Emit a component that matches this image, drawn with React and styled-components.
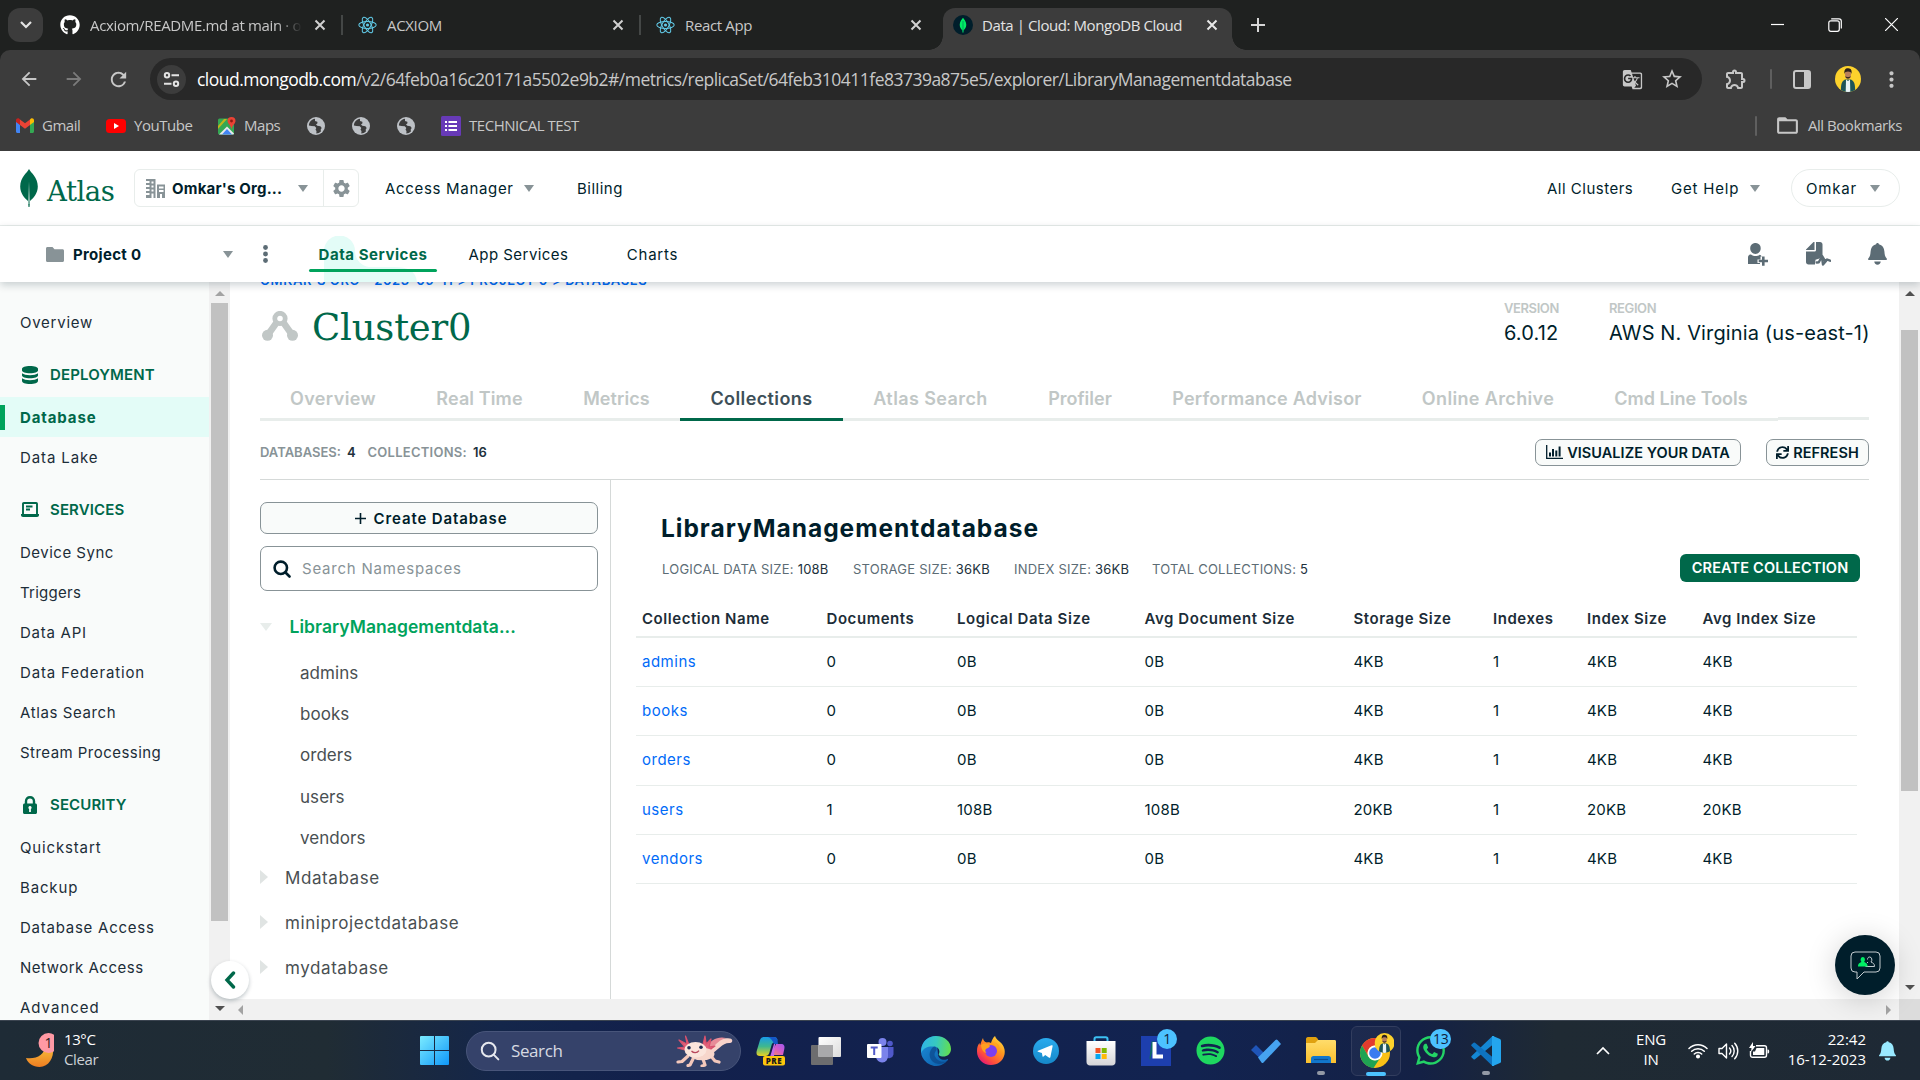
import React from "react";
import styled, { createGlobalStyle, css } from "styled-components";
import { FaGithub, FaSpotify, FaWhatsapp, FaSync } from "react-icons/fa";
import { MdSettings, MdOutlineExtension, MdStarOutline, MdGTranslate, MdMoreVert, MdFolderOpen, MdRefresh, MdArrowBack, MdArrowForward } from "react-icons/md";

const UI = `Inter, "Open Sans", sans-serif`;
const SYS = `"Open Sans", "Noto Sans", sans-serif`;

const Global = createGlobalStyle`
  *, *::before, *::after { box-sizing: border-box; }
  html, body { margin: 0; padding: 0; background: #fff; overflow: hidden; }
  svg { display: block; flex: none; }
`;

const Screen = styled.div`
  width: 1920px;
  height: 1080px;
  display: flex;
  flex-direction: column;
  overflow: hidden;
  font-family: ${UI};
  color: #001e2b;
  white-space: nowrap;
`;

/* ---------- browser chrome ---------- */
const TabStrip = styled.div`
  height: 50px;
  background: #1f2120;
  display: flex;
  padding-left: 8px;
  font: 15px/20px ${SYS};
  letter-spacing: -0.35px;
  color: #c7c7c7;
`;
const TabSearch = styled.div`
  width: 35px;
  height: 34px;
  margin: 8px 2px 0 0;
  border-radius: 12px;
  background: #3c3c3c;
  display: grid;
  place-items: center;
`;
const Tab = styled.div`
  width: 298px;
  height: 50px;
  padding: 0 13px 0 15px;
  display: flex;
  align-items: center;
  gap: 10px;
  border-right: 2px solid transparent;
  border-image: ${(p) => (p.$sep ? "linear-gradient(transparent 30%, #444746 30%, #444746 70%, transparent 70%) 1" : "none")};
`;
const ActiveTab = styled.div`
  position: relative;
  width: 289px;
  height: 42px;
  margin: 8px 0 0 4px;
  padding: 0 12px 8px 10px;
  display: flex;
  align-items: center;
  gap: 9px;
  border-radius: 12px 12px 0 0;
  background: #3c3c3c;
  color: #e3e3e3;
  letter-spacing: -0.42px;
  &::before, &::after {
    content: "";
    position: absolute;
    bottom: 0;
    width: 14px;
    height: 14px;
  }
  &::before { left: -14px; background: radial-gradient(circle at 0 0, transparent 13.5px, #3c3c3c 14px); }
  &::after { right: -14px; background: radial-gradient(circle at 100% 0, transparent 13.5px, #3c3c3c 14px); }
`;
const TabTitle = styled.span`
  flex: 1;
  min-width: 0;
  overflow: hidden;
  ${(p) => p.$fade && css`mask-image: linear-gradient(90deg, #000 88%, transparent 100%);`}
`;
const NewTab = styled.div`
  width: 52px;
  height: 50px;
  display: grid;
  place-items: center;
`;
const WindowControls = styled.div`
  margin-left: auto;
  display: grid;
  grid-template-columns: repeat(3, 57px);
  place-items: center;
  height: 49px;
`;
const ToolbarWrap = styled.div`
  background: #1f2120;
`;
const Toolbar = styled.div`
  height: 58px;
  background: #3c3c3c;
  border-radius: 10px 10px 0 0;
  display: flex;
  align-items: center;
  padding-left: 6px;
`;
const ToolButton = styled.div`
  flex: none;
  width: ${(p) => p.$w || 45}px;
  height: 42px;
  display: grid;
  place-items: center;
  color: ${(p) => (p.$dim ? "#7b7b7b" : "#c7c7c7")};
`;
const Omnibox = styled.div`
  flex: none;
  width: 1552px;
  height: 42px;
  margin-left: 9px;
  padding: 0 10px 0 7px;
  border-radius: 21px;
  background: #282828;
  display: flex;
  align-items: center;
`;
const SiteInfo = styled.div`
  width: 29px;
  height: 29px;
  margin-right: 11px;
  border-radius: 50%;
  background: #3c3c3c;
  display: grid;
  place-items: center;
`;
const Url = styled.div`
  flex: 1;
  font: 17.5px/24px ${SYS};
  color: #c7c7c7;
  letter-spacing: -0.52px;
  b { font-weight: 400; color: #fff; }
`;
const ToolSeparator = styled.i`
  flex: none;
  width: 2px;
  height: 20px;
  border-radius: 1px;
  background: #5f5f5f;
`;
const Bookmarks = styled.div`
  height: 43px;
  background: #3c3c3c;
  display: flex;
  align-items: center;
  padding: 0 0 8px 16px;
  font: 15px/20px ${SYS};
  letter-spacing: -0.47px;
  color: #c7c7c7;
`;
const Bookmark = styled.div`
  width: ${(p) => p.$w}px;
  display: flex;
  align-items: center;
  gap: 8px;
`;
const BookmarkText = styled.span`
  margin-top: -2px;
`;
const BookmarksEnd = styled.div`
  margin-left: auto;
  padding-right: 18px;
  display: flex;
  align-items: center;
  gap: 18px;
`;

/* ---------- Atlas navigation ---------- */
const AtlasNav = styled.header`
  height: 75px;
  background: #fff;
  border-bottom: 1px solid #e8edeb;
  display: flex;
  align-items: center;
  padding: 0 20px;
  font-size: 15px;
`;
const Brand = styled.div`
  width: 114px;
  display: flex;
  align-items: center;
  gap: 9px;
  color: #00684a;
  font: 27.5px/38px "DejaVu Serif", serif;
  letter-spacing: -0.45px;
  span { padding-top: 5px; }
`;
const OrgPicker = styled.div`
  width: 225px;
  height: 38px;
  border: 1px solid #e8edeb;
  border-radius: 6px;
  display: flex;
  align-items: center;
  padding-left: 11px;
`;
const OrgName = styled.span`
  width: 126px;
  margin-left: 7px;
  font-weight: 700;
  letter-spacing: 0.2px;
`;
const OrgSettings = styled.div`
  width: 35px;
  height: 36px;
  margin-left: auto;
  border-left: 1px solid #e8edeb;
  display: grid;
  place-items: center;
  color: #889397;
`;
const NavLink = styled.div`
  width: ${(p) => p.$w}px;
  margin-left: ${(p) => p.$ml || 0}px;
  display: flex;
  align-items: center;
  justify-content: space-between;
  letter-spacing: ${(p) => p.$ls || "0.5px"};
`;
const CaretIcon = styled.i`
  width: 0;
  height: 0;
  border: 5px solid transparent;
  border-top: 7px solid #889397;
  border-bottom: 0;
`;
const NavEnd = styled.div`
  margin-left: auto;
  display: flex;
  align-items: center;
`;
const UserPill = styled.div`
  width: 109px;
  height: 38px;
  margin-left: 31px;
  padding: 0 19px 0 14px;
  border: 1px solid #e8edeb;
  border-radius: 19px;
  display: flex;
  align-items: center;
  justify-content: space-between;
  letter-spacing: 0.8px;
`;
const ProjectNav = styled.nav`
  position: relative;
  z-index: 2;
  height: 56px;
  background: #fff;
  box-shadow: 0 3px 8px rgba(0, 30, 43, 0.2);
  display: flex;
  align-items: center;
  padding: 0 33px 0 46px;
  font-size: 15px;
`;
const ProjectName = styled.span`
  width: 150px;
  margin-left: 9px;
  font-weight: 700;
  letter-spacing: 0.3px;
`;
const ProjectMenu = styled.div`
  margin-left: 30px;
`;
const ProductTab = styled.div`
  position: relative;
  width: ${(p) => p.$w}px;
  height: 56px;
  line-height: 57px;
  text-align: center;
  letter-spacing: ${(p) => p.$ls || "0.45px"};
`;
const CurrentProductTab = styled(ProductTab)`
  margin-left: 41px;
  color: #00684a;
  font-weight: 700;
  letter-spacing: 0.55px;
  span { position: relative; }
  &::after {
    content: "";
    position: absolute;
    left: 0;
    right: 0;
    top: 43px;
    height: 3px;
    border-radius: 2px;
    background: #00a35c;
  }
`;
const TabBlob = styled.svg`
  position: absolute;
  left: 15px;
  top: 10px;
`;
const ProjectActions = styled.div`
  margin-left: auto;
  display: flex;
  align-items: center;
  gap: 37.5px;
  color: #5c6c75;
`;

/* ---------- body ---------- */
const Body = styled.div`
  position: relative;
  flex: 1;
  min-height: 0;
  display: flex;
  overflow: hidden;
`;
const Sidebar = styled.aside`
  width: 209px;
  height: 738px;
  overflow: hidden;
  padding-top: 20px;
  background: #f9fbfa;
  color: #1c2d38;
`;
const SideItem = styled.div`
  height: 40px;
  padding-left: 20px;
  font-size: 15px;
  line-height: 42px;
  letter-spacing: ${(p) => p.$ls || 0.42}px;
`;
const SideItemActive = styled(SideItem)`
  background: linear-gradient(#00a35c, #00a35c) -5px 50% / 10px 25px no-repeat #e3fcf7;
  color: #00684a;
  font-weight: 700;
`;
const SideHeading = styled.div`
  height: 41px;
  margin: 12px 0 2px;
  padding-left: 20px;
  display: flex;
  align-items: center;
  gap: 10px;
  color: #00684a;
  font-size: 15px;
  font-weight: 600;
  letter-spacing: 0.12px;
  svg { width: 20px; }
`;
const ScrollTrack = styled.div`
  width: 21px;
  height: ${(p) => p.$h}px;
  background: #f1f1f1;
  display: flex;
  flex-direction: column;
  align-items: center;
  padding: 9px 0;
`;
const ScrollThumb = styled.i`
  width: 17px;
  height: ${(p) => p.$h}px;
  margin-top: ${(p) => p.$mt}px;
  margin-bottom: auto;
  background: #c1c1c1;
`;
const ScrollArrow = styled.i`
  width: 0;
  height: 0;
  border: 5px solid transparent;
  ${(p) => p.$dir === "up" && css`border-top: 0; border-bottom: 5px solid ${p.$c};`}
  ${(p) => p.$dir === "down" && css`border-bottom: 0; border-top: 5px solid ${p.$c};`}
  ${(p) => p.$dir === "left" && css`border-left: 0; border-right: 5px solid ${p.$c};`}
  ${(p) => p.$dir === "right" && css`border-right: 0; border-left: 5px solid ${p.$c};`}
`;
const MainColumn = styled.div`
  width: 1669px;
  display: flex;
  flex-direction: column;
`;
const HScroll = styled.div`
  height: 21px;
  background: #f1f1f1;
  display: flex;
  align-items: center;
  justify-content: space-between;
  padding: 0 8px;
`;
const EndColumn = styled.div`
  width: 21px;
  background: #dcdcdc;
`;
const Main = styled.main`
  height: 717px;
  overflow: hidden;
  padding: 0 30px;
  display: flex;
  flex-direction: column;
`;
const Breadcrumb = styled.div`
  margin-top: -11px;
  height: 19px;
  color: #016bf8;
  font-size: 13px;
  font-weight: 600;
  line-height: 19px;
  letter-spacing: 0.6px;
`;
const ClusterHeader = styled.div`
  height: 73px;
  display: flex;
  align-items: flex-start;
  padding: 5px 0 0 2px;
`;
const ClusterGlyph = styled.div`
  padding-top: 16px;
`;
const ClusterName = styled.h1`
  margin: 5px 0 0 14px;
  flex: 1;
  font: 400 37px/56px "DejaVu Serif", serif;
  letter-spacing: -0.2px;
  color: #00684a;
`;
const Meta = styled.dl`
  width: ${(p) => p.$w}px;
  margin: 3px 0 0;
  dt { font-size: 13px; font-weight: 600; line-height: 20px; letter-spacing: -0.4px; color: #c1c7c6; }
  dd { margin: 2px 0 0; font-size: 20px; line-height: 26px; letter-spacing: 0.13px; color: #001e2b; }
`;
const ClusterTabs = styled.div`
  display: flex;
  height: 58px;
  align-items: flex-start;
  &::after { content: ""; flex: 1; height: 57px; border-bottom: 3px solid #e8edeb; }
`;
const ClusterTab = styled.div`
  width: ${(p) => p.$w}px;
  height: 58px;
  border-bottom: 3px solid ${(p) => (p.$on ? "#00684a" : "#e8edeb")};
  color: ${(p) => (p.$on ? "#3d4f58" : "#c1c7c6")};
  font-size: 18px;
  font-weight: 600;
  line-height: 72px;
  text-align: center;
  letter-spacing: ${(p) => p.$ls}px;
`;
const CountBar = styled.div`
  height: 59px;
  display: flex;
  align-items: center;
  border-bottom: 1px solid #d5d9d8;
  font-size: 13px;
  font-weight: 600;
  color: #889397;
`;
const Count = styled.div`
  width: ${(p) => p.$w}px;
  display: flex;
  gap: 6px;
  padding-top: 3px;
  letter-spacing: ${(p) => p.$ls || 0}px;
  b { font-weight: 600; color: #21313c; }
`;
const OutlineButton = styled.div`
  width: ${(p) => p.$w}px;
  height: 27px;
  margin-top: 4px;
  margin-left: ${(p) => p.$ml || 0};
  border: 1px solid #889397;
  border-radius: 7px;
  background: #f9fbfa;
  color: #001e2b;
  display: flex;
  align-items: center;
  justify-content: center;
  gap: 4px;
  font-size: 14.5px;
  font-weight: 600;
  letter-spacing: 0.05px;
`;
const CreateDatabase = styled(OutlineButton)`
  width: 338px;
  height: 32px;
  margin: 0;
  padding-left: 4px;
  gap: 8px;
  font-size: 15px;
  letter-spacing: 0.87px;
`;
const Explorer = styled.div`
  flex: 1;
  display: flex;
`;
const Namespaces = styled.div`
  width: 351px;
  border-right: 1px solid #d5d9d8;
  padding: 22px 12px 0 0;
`;
const SearchBox = styled.div`
  height: 45px;
  margin-top: 12px;
  padding-left: 12px;
  border: 1px solid #889397;
  border-radius: 7px;
  display: flex;
  align-items: center;
  gap: 11px;
  color: #889397;
  font-size: 15px;
  letter-spacing: 0.78px;
`;
const TreeOpen = styled.div`
  height: 41px;
  margin-top: 15px;
  display: flex;
  align-items: center;
  gap: 17.5px;
  color: #00a35c;
  font-size: 17.5px;
  font-weight: 600;
  letter-spacing: 0.06px;
`;
const TreeLeaf = styled.div`
  height: 41.2px;
  padding-left: 40px;
  font-size: 17px;
  line-height: 41px;
  letter-spacing: 0.05px;
  color: #494f52;
`;
const TreeGroup = styled.div`
  padding-top: 6px;
  height: 208.5px;
`;
const TreeClosed = styled.div`
  height: 45px;
  display: flex;
  align-items: center;
  gap: 17px;
  font-size: 17px;
  letter-spacing: 0.58px;
  color: #494f52;
`;
const TreeCaretDown = styled.i`
  border: 6.5px solid transparent;
  border-top: 8px solid #e8edeb;
  border-bottom: 0;
`;
const TreeCaretRight = styled.i`
  margin-top: -3px;
  border: 7px solid transparent;
  border-left: 8px solid #e0e4e3;
  border-right: 0;
`;
const Detail = styled.section`
  flex: 1;
  padding: 32px 12px 0 25px;
`;
const DbTitle = styled.h2`
  margin: 0 0 0 25px;
  font-size: 24.5px;
  font-weight: 700;
  line-height: 32px;
  letter-spacing: 0.97px;
`;
const StatRow = styled.div`
  height: 28px;
  margin-top: 10px;
  padding: 0 0 0 26px;
  display: flex;
  align-items: center;
  font-size: 13px;
  color: #5c6c75;
`;
const Stat = styled.span`
  width: ${(p) => p.$w}px;
  padding-top: 1px;
  letter-spacing: 0.23px;
  b { font-weight: 400; color: #21313c; }
`;
const CreateCollection = styled.div`
  width: 180px;
  height: 28px;
  margin: 0 -3px 0 auto;
  border-radius: 6px;
  background: #00684a;
  color: #fff;
  font-size: 14.5px;
  font-weight: 600;
  line-height: 28px;
  text-align: center;
  letter-spacing: 0.18px;
`;
const Table = styled.div`
  margin-top: 16px;
  font-size: 15px;
`;
const Row = styled.div`
  height: 49.2px;
  display: grid;
  grid-template-columns: 184.5px 130.5px 187.5px 209px 139.5px 94px 115.5px 1fr;
  align-items: center;
  padding: 0 0 1px 6px;
  border-bottom: 1px solid #e8edeb;
  letter-spacing: 0.18px;
`;
const HeadRow = styled(Row)`
  height: 40px;
  padding: 2px 0 0 6px;
  border-bottom-width: 2px;
  font-weight: 600;
  letter-spacing: 0.56px;
  color: #1c2d38;
`;
const CollectionLink = styled.span`
  color: #016bf8;
  letter-spacing: 0.5px;
`;
const CollapseButton = styled.div`
  position: absolute;
  left: 211px;
  top: 679px;
  width: 38px;
  height: 38px;
  border-radius: 50%;
  background: #fff;
  box-shadow: 0 2px 4px rgba(0, 30, 43, 0.25);
  display: grid;
  place-items: center;
`;
const ChatButton = styled.div`
  position: absolute;
  left: 1835px;
  top: 653px;
  width: 60px;
  height: 60px;
  border-radius: 50%;
  background: #001e2b;
  box-shadow: 0 4px 30px rgba(0, 0, 0, 0.18);
  display: grid;
  place-items: center;
`;

/* ---------- taskbar ---------- */
const Taskbar = styled.footer`
  height: 60px;
  border-top: 1px solid #3b4450;
  background: linear-gradient(90deg, #1e2b36 0, #202c34 17%, #14264a 26%, #12204c 34%, #122350 62%, #142145 74%, #1f2a33 81%, #1e2935 100%);
  display: flex;
  align-items: center;
  font: 15px/20px ${SYS};
  color: #fff;
`;
const Weather = styled.div`
  width: 420px;
  padding-left: 25px;
  display: flex;
  gap: 10px;
  align-items: center;
`;
const WeatherText = styled.div`
  margin-top: -3px;
  line-height: 20px;
  font-size: 15px;
  letter-spacing: -0.4px;
  p { margin: 0; }
  p + p { color: #cdd1d6; }
`;
const TaskSearch = styled.div`
  width: 275px;
  height: 40px;
  margin: 0 2px 0 17px;
  padding: 0 7px 0 13px;
  border: 1px solid #48557a;
  border-radius: 20px;
  background: #35426a;
  display: flex;
  align-items: center;
  gap: 11px;
  font-size: 17px;
  letter-spacing: -0.4px;
  color: #d7dae2;
  svg:last-child { margin-left: auto; }
`;
const TaskSlot = styled.div`
  position: relative;
  width: 55px;
  height: 50px;
  display: grid;
  place-items: center;
  &::after {
    content: "";
    position: absolute;
    left: 50%;
    bottom: ${(p) => (p.$active ? 0 : 1)}px;
    width: ${(p) => (p.$active ? 20 : p.$open ? 8 : 0)}px;
    height: 4px;
    border-radius: 2px;
    transform: translateX(-50%);
    background: ${(p) => (p.$active ? "#4cc2ff" : "#9399a5")};
  }
`;
const ActiveTile = styled.div`
  width: 50px;
  height: 50px;
  border-radius: 6px;
  border: 1px solid #323d5e;
  background: #26325480;
  display: grid;
  place-items: center;
`;
const CountBadge = styled.span`
  position: absolute;
  top: 3px;
  left: ${(p) => p.$x}px;
  min-width: 20px;
  height: 20px;
  padding: 0 3px;
  border-radius: 10px;
  background: #4cc2ff;
  color: #10203a;
  font-size: 14px;
  line-height: 20px;
  text-align: center;
  letter-spacing: -0.3px;
`;
const Tray = styled.div`
  flex: 1;
  padding-left: 83px;
  display: flex;
  align-items: center;
  font-size: 15px;
  letter-spacing: -0.2px;
`;
const Language = styled.div`
  width: 50px;
  margin: -3px 12px 0 16px;
  text-align: center;
  line-height: 20px;
`;
const TrayIcons = styled.div`
  display: flex;
  gap: 10px;
  align-items: center;
`;
const Clock = styled.div`
  width: 97px;
  margin: -3px 13px 0 -1px;
  text-align: right;
  line-height: 20px;
  letter-spacing: 0;
`;

/* ---------- icons ---------- */
const Close = ({ c = "#d0d0d0" }) => (
  <svg width="16" height="16" viewBox="0 0 16 16"><path d="M3.500 3.500l9 9M12.500 3.500l-9 9" stroke={c} strokeWidth="2" /></svg>
);
const ReactLogo = () => (
  <svg width="19" height="20" viewBox="-12 -12 24 24" fill="none" stroke="#61c9e6" strokeWidth="1.300">
    <circle r="2" fill="#61c9e6" stroke="none" />
    <ellipse rx="11" ry="4.300" /><ellipse rx="11" ry="4.300" transform="rotate(60)" /><ellipse rx="11" ry="4.300" transform="rotate(120)" />
  </svg>
);
const MongoFavicon = () => (
  <svg width="20" height="20" viewBox="0 0 20 20"><circle cx="10" cy="10" r="10" fill="#001e2b" /><path d="M10 2.800c1 1.800 3.300 3.400 3.300 7 0 3-1.700 4.700-2.900 5.600L10.200 17.500h-.5l-.2-2.100C8.300 14.500 6.700 12.800 6.700 9.800 6.700 6.200 9 4.600 10 2.800z" fill="#00ed64" /><path d="M10 6v11.500" stroke="#00a35c" strokeWidth="1" /></svg>
);
const Tune = () => (
  <svg width="17" height="17" viewBox="0 0 17 17" fill="none" stroke="#e3e3e3" strokeWidth="2"><circle cx="4" cy="4.300" r="2.200" /><path d="M8.500 4.300H16M1 12.700h7.500" /><circle cx="13" cy="12.700" r="2.200" /></svg>
);
const Globe = () => (
  <svg width="18" height="18" viewBox="0 0 18 18"><circle cx="9" cy="9" r="9" fill="#bdc1c6" /><path d="M8 1.800c-3.500.5-6 3.300-6.100 6.600L4.500 9l3.300.3 1.500 1.800-.8 1.600 1 1.300-.2 2.400c1.800 0 3.400-.8 4.600-2l-.2-1.900 1-1.500-1.300-1.800-3.100-.4L9 7.500l1.500-1.300-.2-1.500L8 4z" fill="#3c3c3c" /></svg>
);
const Gmail = () => (
  <svg width="18" height="15" viewBox="0 0 18 15"><path d="M0 2v11.500C0 14.300.6 15 1.500 15H4V6.500z" fill="#4285f4" /><path d="M18 2v11.500c0 .8-.6 1.500-1.500 1.500H14V6.500z" fill="#34a853" /><path d="M0 2.500V4l4 3V1.500L3 .6C1.800-.3 0 .6 0 2.500z" fill="#c5221f" /><path d="M18 2.500V4l-4 3V1.500l1-.9C16.200-.3 18 .6 18 2.500z" fill="#fbbc04" /><path d="M4 1.500l5 3.800 5-3.800V7l-5 3.800L4 7z" fill="#ea4335" /></svg>
);
const Maps = () => (
  <svg width="18" height="18" viewBox="0 0 18 18"><rect y="1.500" width="16" height="16" rx="1.500" fill="#34a853" /><path d="M1 17.500L9 9.500l7 7-.5 1z" fill="#e8eaed" /><path d="M4 17.500l5-5.500 5 5.500z" fill="#4285f4" /><path d="M0 16V9l6-7h3L0 12z" fill="#fbbc04" opacity=".7" /><path d="M13.500 0A4 4 0 0 0 9.500 4c0 3 4 4.300 4 9 0-4.700 4-6 4-9a4 4 0 0 0-4-4z" fill="#ea4335" /><circle cx="13.500" cy="4" r="1.400" fill="#8e1b12" /></svg>
);
const FormIcon = () => (
  <svg width="20" height="20" viewBox="0 0 20 20"><rect width="20" height="20" rx="1.500" fill="#673ab7" /><path d="M7.500 6h8.500M7.500 10h8.500M7.500 14h8.500M4 6h2M4 10h2M4 14h2" stroke="#fff" strokeWidth="2" /></svg>
);
const YouTube = () => (
  <svg width="20" height="14" viewBox="0 0 20 14"><rect width="20" height="14" rx="3.500" fill="#f00" /><path d="M8 4l5 3-5 3z" fill="#fff" /></svg>
);
const Portrait = ({ size = 26 }) => (
  <svg width={size} height={size} viewBox="0 0 26 26"><clipPath id={"pc" + size}><circle cx="13" cy="13" r="13" /></clipPath><g clipPath={`url(#pc${size})`}><rect width="26" height="26" fill="#fdd22c" /><path d="M6 26c-.500-8 1-11 4-12.500h6c3 1.500 4.500 4.500 4 12.500z" fill="#1e5457" /><path d="M11 13.500l2 1.500 2-1.500.3 12.500h-4.600z" fill="#e9f4f6" /><ellipse cx="13" cy="8.500" rx="3" ry="4.200" fill="#b97f5a" /><path d="M9.500 8C8.800 3.800 10.500 2 13.300 2.200c3 .2 3.800 2.300 3.200 5.800-.5-2-1.500-2.600-3.500-2.600s-3 .6-3.500 2.600z" fill="#2b211d" /><path d="M10.200 10.200c.5 3.200 5 3.200 5.600 0-1 1-4.600 1-5.600 0z" fill="#3a2a22" /></g></svg>
);
const Leaf = () => (
  <svg width="18" height="38" viewBox="0 0 18 38"><path d="M9 0c1.500 3.500 8.800 8 8.800 17.500 0 7-4.300 11.500-7.800 14.500l-.5 6h-1L8 32C4.500 29 .2 24.500.2 17.500.2 8 7.500 3.500 9 0z" fill="#00684a" /><path d="M9 13l.6 19-.2 3h-.8l-.2-3z" fill="#fff" opacity=".85" /></svg>
);
const Building = () => (
  <svg width="19" height="19" viewBox="0 0 19 19"><path fillRule="evenodd" d="M0 0h9.500v19H0v-3h3.500v-2H0v-2h3.500v-2H0V8h3.500V6H0V4h3.500V2H0zM5.500 2.500v2h2v-2zm0 4v2h2v-2zm0 4v2h2v-2zm0 4V19h2v-4.500zM11 5.500h8V19h-3v-4h-2v4h-3zm2 2v2h4.500v-2zm0 3.500v2h4.500v-2z" fill="#889397" /></svg>
);
const FolderSolid = () => (
  <svg width="18" height="15" viewBox="0 0 18 15"><path d="M0 1.500C0 .7.600 0 1.500 0h5l2 2.300H16.500c.9 0 1.500.6 1.500 1.500V13.500c0 .9-.6 1.500-1.500 1.500h-15C.6 15 0 14.400 0 13.500z" fill="#889397" /></svg>
);
const Dots = () => (
  <svg width="5" height="18" viewBox="0 0 5 18" fill="#5c6c75"><circle cx="2.500" cy="2.500" r="2.400" /><circle cx="2.500" cy="9" r="2.400" /><circle cx="2.500" cy="15.500" r="2.400" /></svg>
);
const InviteUser = () => (
  <svg width="20" height="23" viewBox="0 0 20 23" fill="#5c6c75"><path d="M7.500 0a5 5 0 0 1 5.200 5.300c0 3.200-2.300 5.700-5.200 5.700S2.200 8.500 2.200 5.300A5 5 0 0 1 7.500 0z" /><path d="M0 21v-6.500C0 12.300 1.500 11.500 3 11.500c1.500 1.200 3 1.500 4.500 1.500s3-.3 4.200-1.300c1 .3 1.800.8 2 1.800h-1.200v3H9.500V20H12v1z" /><path d="M14 13.500h2.600v3.200H20v2.600h-3.400v3.400H14v-3.400h-3.300v-2.600H14z" /></svg>
);
const ActivityFeed = () => (
  <svg width="25" height="24" viewBox="0 0 25 24" fill="#5c6c75"><path d="M8.500 0v8H0V7.500L7.500 0zM10 0h4c1.500 0 2.500 1 2.500 2.500V13l-3 3.500-4 1.200L9 22.500H2.500C1 22.500 0 21.500 0 20V9.600h8.300c1 0 1.700-.6 1.700-1.600z" /><path d="M10.800 20.500l2-.3 3.300-6.200 3 5 2-1.500 2.900 1.200M16 15l1 7.500 3-3.500" stroke="#5c6c75" strokeWidth="2.400" fill="none" strokeLinejoin="round" strokeLinecap="round" /></svg>
);
const Bell = ({ c = "#5c6c75", w = 19, h = 22 }) => (
  <svg width={w} height={h} viewBox="0 0 19 22" fill={c}><path d="M9.500 0c.8 0 1.400.6 1.400 1.300 3.500.8 5.300 3.700 5.500 7.200.2 3.500.8 5.500 2.300 7 .5.6.3 1.500-.6 1.500H.9c-.9 0-1.100-.9-.6-1.500 1.500-1.500 2.100-3.500 2.300-7 .2-3.500 2-6.400 5.500-7.200C8.100.6 8.700 0 9.500 0zM6.300 18.500h6.400c0 1.900-1.400 3.200-3.200 3.200s-3.200-1.300-3.200-3.200z" /></svg>
);
const DatabaseIcon = () => (
  <svg width="16" height="18" viewBox="0 0 16 18" fill="#00684a"><path d="M0 3C0 1.200 3.300 0 8 0s8 1.200 8 3v1.500c0 1.500-3.300 2.700-8 2.700S0 6 0 4.500z" /><path d="M0 7.200c1.500 1.300 4.500 2 8 2s6.500-.7 8-2v2.300c0 1.600-3.300 2.700-8 2.700S0 11.100 0 9.500z" /><path d="M0 12.300c1.500 1.300 4.500 2 8 2s6.500-.7 8-2v2.400C16 16.800 12.700 18 8 18s-8-1.200-8-3.300z" /></svg>
);
const LaptopIcon = () => (
  <svg width="18" height="15" viewBox="0 0 18 15"><path d="M2 12V1.800C2 1.300 2.300 1 2.800 1h12.400c.5 0 .8.300.8.800V12M5 4.500h6.500M5 7.500h4" fill="none" stroke="#00684a" strokeWidth="1.900" /><path d="M0 12h18v1c0 1.200-.8 2-2 2H2c-1.200 0-2-.8-2-2z" fill="#00684a" /></svg>
);
const LockIcon = () => (
  <svg width="14" height="18" viewBox="0 0 14 18"><path d="M3 8V5.200C3 3 4.600 1.300 7 1.300S11 3 11 5.200V8" fill="none" stroke="#00684a" strokeWidth="2.400" /><path fillRule="evenodd" d="M1.500 7.500h11c.8 0 1.500.7 1.500 1.500v7.500c0 .8-.7 1.500-1.500 1.500h-11C.7 18 0 17.300 0 16.500V9c0-.8.700-1.500 1.500-1.500zM7 10a1.700 1.700 0 0 0-.9 3.100V16h1.800v-2.900A1.700 1.700 0 0 0 7 10z" fill="#00684a" /></svg>
);
const ReplicaIcon = () => (
  <svg width="36" height="30" viewBox="0 0 36 30"><path d="M15 11L6.500 23M21 11l8.500 12" stroke="#c1c7c6" strokeWidth="6.500" /><circle cx="18" cy="7.500" r="5.200" fill="none" stroke="#c1c7c6" strokeWidth="4.800" /><circle cx="5.500" cy="24.300" r="5.500" fill="#c1c7c6" /><circle cx="30.500" cy="24.300" r="5.500" fill="#c1c7c6" /></svg>
);
const ChartIcon = () => (
  <svg width="17" height="14" viewBox="0 0 17 14"><path d="M.7 0v13.300H17" fill="none" stroke="#001e2b" strokeWidth="1.300" /><path d="M4 11.500V7.500M7 11.500V4M10.300 11.500V5.500M13.600 11.500V1.500" stroke="#001e2b" strokeWidth="2" /></svg>
);
const SearchGlyph = ({ c = "#001e2b", s = 18, w = 2.6 }) => (
  <svg width={s} height={s} viewBox="0 0 18 18" fill="none" stroke={c} strokeWidth={w} strokeLinecap="round"><circle cx="7.800" cy="7.800" r="6.200" /><path d="M12.500 12.500l4 4" /></svg>
);
const Moon = () => (
  <svg width="29" height="36" viewBox="0 0 29 36"><defs><linearGradient id="mn" x1="0" y1="0" x2="0" y2="1"><stop offset="0" stopColor="#f7c23c" /><stop offset="1" stopColor="#ee7d22" /></linearGradient></defs><path d="M28 16c1 8-4 18-13.500 18C8 34 3 30.500 1 25c10 1.500 19-3 19-12z" fill="url(#mn)" /><circle cx="23.500" cy="10" r="10" fill="#ff99a4" /><text x="23.500" y="15" textAnchor="middle" fontFamily="Open Sans" fontSize="14" fill="#2b1a1c">1</text></svg>
);
const WinLogo = () => (
  <svg width="29" height="29" viewBox="0 0 29 29"><defs><linearGradient id="wl" x1="0" y1="0" x2="1" y2="1"><stop offset="0" stopColor="#7bebff" /><stop offset="1" stopColor="#0f97f8" /></linearGradient></defs><path d="M0 1q0-1 1-1h13v14H0zM15 0h13q1 0 1 1v13H15zM0 15h14v14H1q-1 0-1-1zM15 15h14v13q0 1-1 1H15z" fill="url(#wl)" /></svg>
);
const Axolotl = () => (
  <svg width="57" height="32" viewBox="0 0 57 32"><path d="M30 14C36 6 44 2 54 3.500c3 .5 3 4 0 4.500-8-.5-11 7-20 12z" fill="#f8d3ca" /><path d="M30 13C34 5 42 1 50 3c-6 2-10 5-15 12z" fill="#e88c98" /><path d="M13 10L9.500 1l1.500 8-8-4 6 7-7.500 1L9 15M27 9.500L29 1l1.200 8L35 4l-2 8 6-1-7 5" fill="#e0627a" stroke="#d9526e" strokeWidth="1.200" strokeLinejoin="round" /><path d="M12 21l-6 5.500-4 .5M17 24l-3 6-2 .5M27 24l2 6-3 1M34 20l5 6 4 1" stroke="#f4c8bb" strokeWidth="3.200" fill="none" strokeLinecap="round" strokeLinejoin="round" /><ellipse cx="26" cy="19" rx="12.500" ry="6.300" fill="#f7d6cb" /><ellipse cx="19.500" cy="14.800" rx="11" ry="7.800" fill="#fbe5dc" /><circle cx="13" cy="12.800" r="1.800" fill="#1c2c52" /><circle cx="25" cy="12.300" r="1.800" fill="#1c2c52" /><path d="M15.500 16c2 2.300 5.500 2.300 7.500-.3" stroke="#b8465c" strokeWidth="1.200" fill="none" /></svg>
);
const Copilot = () => (
  <svg width="30" height="30" viewBox="0 0 30 30"><defs><linearGradient id="ca" x1="0" y1="0" x2="0" y2="1"><stop offset="0" stopColor="#189be8" /><stop offset=".5" stopColor="#3fb88e" /><stop offset="1" stopColor="#e8d222" /></linearGradient><linearGradient id="cb" x1="1" y1="0" x2="0" y2="1"><stop offset="0" stopColor="#a158f0" /><stop offset=".5" stopColor="#d65bc6" /><stop offset="1" stopColor="#f98b5a" /></linearGradient></defs><path d="M8 1h10c2 0 3 1 3.500 3L20 6c-3 0-4 1-4.700 4l-2 7c-.7 2-2 3-4 3H4c-3 0-4-2-3.300-5L4 4c.7-2 2-3 4-3z" fill="url(#ca)" /><path d="M12 1h6c2 0 3 1 3.500 3L22 8h-4c-2-4-3-6-6-7z" fill="#1557c8" /><path d="M20 8h5c3 0 4 2 3.300 5L27 19H15z" fill="url(#cb)" /><path d="M19 8h-1l-4 13h4z" fill="#c86ae8" /><rect x="7" y="20" width="22" height="9.500" rx="2" fill="#fdc60c" /><text x="18" y="27.700" textAnchor="middle" fontFamily="Open Sans" fontWeight="800" fontSize="8" letterSpacing=".5" fill="#1b1b1b">PRE</text></svg>
);
const TaskView = () => (
  <svg width="30" height="28" viewBox="0 0 30 28"><defs><linearGradient id="tv" x1="0" y1="0" x2="1" y2="1"><stop offset="0" stopColor="#fff" /><stop offset="1" stopColor="#dcdcdc" /></linearGradient></defs><rect y="8" width="22" height="20" rx="1" fill="#6d6d6f" /><rect x="7.500" y="0" width="22.500" height="20" rx="1" fill="url(#tv)" /><path d="M7.500 8H22v12H7.500z" fill="#a9a9ab" /></svg>
);
const Teams = () => (
  <svg width="28" height="26" viewBox="0 0 28 26"><circle cx="23" cy="5.500" r="2.800" fill="#5059c9" /><path d="M18 9h8.500v7.500a4.500 4.500 0 0 1-8 2z" fill="#5059c9" /><circle cx="15.500" cy="4" r="4" fill="#7b83eb" /><path d="M9 9h12v9a6 6 0 0 1-12 1z" fill="#7b83eb" /><rect y="6" width="14.500" height="14" rx="1" fill="#fff" /><path d="M3.700 9.500h7M7.200 9.500v7.500" stroke="#5059c9" strokeWidth="2" /></svg>
);
const Edge = () => (
  <svg width="30" height="30" viewBox="0 0 30 30"><defs><linearGradient id="ea" x1="0" y1=".3" x2="1" y2=".4"><stop offset="0" stopColor="#2fb3e8" /><stop offset=".5" stopColor="#37c9c0" /><stop offset="1" stopColor="#62de50" /></linearGradient><linearGradient id="eb" x1="0" y1="0" x2="1" y2="1"><stop offset="0" stopColor="#1d90dc" /><stop offset="1" stopColor="#0b5aa6" /></linearGradient></defs><path d="M15 0a15 15 0 1 0 11.500 24.600c1-1.200.4-1.800-.6-1.300-4 1.700-8.900-.6-8.900-5.300z" fill="url(#eb)" /><path d="M.2 13C1.500 5 7.500 0 15 0c9 0 15 6 15 13 0 5-4 7.500-7.500 7.500-4 0-5.500-1.500-4.500-3 1-1.700.5-6.500-5-7C8 10 2.500 11 .2 17z" fill="url(#ea)" /><path d="M13.500 10.500C9 12 6.500 20 11 25c3.500 3.800 10 4 15 .5-5 1-10-.5-12-5-1.200-3 .5-5 1.500-6.500.7-1.500-.5-3-2-3.500z" fill="#0c4a8c" opacity=".75" /></svg>
);
const Firefox = () => (
  <svg width="30" height="30" viewBox="0 0 30 30"><defs><linearGradient id="fa" x1="1" y1="0" x2=".2" y2="1"><stop offset="0" stopColor="#fff14d" /><stop offset=".4" stopColor="#ff9a1e" /><stop offset=".75" stopColor="#ff4f3b" /><stop offset="1" stopColor="#e0117e" /></linearGradient></defs><path d="M19 0c1 3 3 4 5 6 4 3.500 5.500 8 4.500 12.500C27 25 21.500 29 15 29 7 29 1 23 1 15.500c0-4 .6-6 2.500-8.500l.5 2.500C5 6 6 4 7 2c.3 2.500 1.500 4 4 4.500 2-.5 3 .2 4 .5 1-3 2-5.500 4-7z" fill="url(#fa)" /><circle cx="15" cy="15" r="6" fill="#7b3ff0" /><path d="M5 9c3-2 6-2 9 1-1 2-3 2-4 3s-1 2.500.5 4c-3-.5-5-3-5.500-8zM16 6c5 1 7 5 6 10 3-4 2-9-6-10z" fill="#ff9f1f" /></svg>
);
const Telegram = () => (
  <svg width="26" height="26" viewBox="0 0 26 26"><defs><linearGradient id="tg" x1="0" y1="0" x2="0" y2="1"><stop offset="0" stopColor="#2aabee" /><stop offset="1" stopColor="#1688c9" /></linearGradient></defs><circle cx="13" cy="13" r="13" fill="url(#tg)" /><path d="M5 12.800l13.500-5.500c.8-.3 1.300.1 1.100 1l-2.200 10.600c-.2.900-.8 1.100-1.600.7l-3.600-2.700-1.700 1.700c-.4.400-.9.200-1-.3l-.6-3.300L5 13.800c-.6-.2-.6-.7 0-1zM9.500 14.500l7-5-5.500 5.800z" fill="#fff" /></svg>
);
const Store = () => (
  <svg width="30" height="30" viewBox="0 0 30 30"><defs><linearGradient id="st" x1="0" y1="0" x2="0" y2="1"><stop offset="0" stopColor="#fff" /><stop offset="1" stopColor="#d5d5d8" /></linearGradient></defs><path d="M8.500 6V3c0-1 .6-1.700 1.700-1.700h9.600c1 0 1.700.7 1.700 1.700v3" fill="none" stroke="#3cc0f2" strokeWidth="2" /><path d="M.5 5h29v21c0 2-1.500 3.500-3.500 3.500H4c-2 0-3.500-1.500-3.500-3.500z" fill="url(#st)" /><path d="M9.500 12h5v5h-5z" fill="#f35325" /><path d="M15.700 12h5v5h-5z" fill="#7fba00" /><path d="M9.500 18h5v5h-5z" fill="#05a6f0" /><path d="M15.700 18h5v5h-5z" fill="#ffba08" /></svg>
);
const LApp = () => (
  <svg width="30" height="30" viewBox="0 0 30 30"><path d="M0 0h30v30H0z" fill="#1d3fae" /><path d="M8.500 22l2-16.500h3.500L9 24z" fill="#0d6b62" /><path d="M13.500 6v14.500H22" fill="none" stroke="#fff" strokeWidth="4" /></svg>
);
const Todo = () => (
  <svg width="30" height="26" viewBox="0 0 30 26"><path d="M0 12l5-5 8 8-4.500 5z" fill="#1f55b8" /><path d="M7 19.500L24.500 2q1-1 2 0L30 6 12.500 24.500q-1 1-2 0z" fill="#46a3f0" /></svg>
);
const Explore = () => (
  <svg width="30" height="27" viewBox="0 0 30 27"><defs><linearGradient id="fe" x1="0" y1="0" x2="0" y2="1"><stop offset="0" stopColor="#ffdc6b" /><stop offset="1" stopColor="#fbc02d" /></linearGradient></defs><path d="M0 2C0 1 .6 0 2 0h7c1 0 2 .5 2.500 1.500L13 4v6H0z" fill="#e0a10f" /><path d="M0 6h9l3-3h16.500C29.500 3 30 3.600 30 4.500V26H0z" fill="url(#fe)" /><path d="M5 26v-4.500C5 20 6 19 7.500 19h15c1.500 0 2.500 1 2.500 2.500V26z" fill="#1277cc" /><path d="M8 22.500h14" stroke="#0b4f93" strokeWidth="1.200" /></svg>
);
const ChromeApp = () => (
  <svg width="36" height="36" viewBox="0 0 36 36"><g transform="translate(2 5)"><circle cx="15" cy="15" r="15" fill="#fbc116" /><path d="M2 7.500A15 15 0 0 1 28 7.500H15a7.500 7.500 0 0 0-6.800 10.500z" fill="#e33b2e" /><path d="M2 7.500A15 15 0 0 0 13.500 30l6.300-9.500a7.500 7.500 0 0 1-11.300-2z" fill="#1fa353" /><circle cx="15" cy="15" r="7.500" fill="#fff" /><circle cx="15" cy="15" r="5.800" fill="#3a7cf0" /></g><g transform="translate(16.500 0)"><Portrait size={20} /></g></svg>
);
const VSCode = () => (
  <svg width="30" height="30" viewBox="0 0 30 30"><path d="M22 0l7 3q1 .5 1 1.500v21q0 1-1 1.500l-7 3z" fill="#24a5ee" /><path d="M22 0v8.500L4 23.200q-.8.600-1.500 0L.6 21.500q-.8-.7 0-1.500L21 .5z" fill="#1487d4" /><path d="M22 30v-8.500L4 6.800q-.8-.6-1.500 0L.6 8.500q-.8.700 0 1.500L21 29.500z" fill="#0e73c0" /><path d="M22 0v30" stroke="#24a5ee" strokeWidth="2" /></svg>
);
const Wifi = () => (
  <svg width="20" height="16" viewBox="0 0 20 16" fill="none" stroke="#fff" strokeWidth="1.500" strokeLinecap="round"><path d="M1 5.500a12.700 12.700 0 0 1 18 0M3.700 8.300a8.900 8.900 0 0 1 12.600 0M6.300 11a5.200 5.200 0 0 1 7.400 0" /><circle cx="10" cy="13.500" r="1.300" fill="#fff" /></svg>
);
const Volume = () => (
  <svg width="21" height="18" viewBox="0 0 21 18" fill="none" stroke="#fff" strokeWidth="1.400" strokeLinecap="round" strokeLinejoin="round"><path d="M1 6.500h3L8.500 2v14L4 11.500H1zM11.500 6a4.500 4.500 0 0 1 0 6M14 3.500a8 8 0 0 1 0 11M16.700 1.200a11.500 11.500 0 0 1 0 15.600" /></svg>
);
const Battery = () => (
  <svg width="21" height="17" viewBox="0 0 21 17"><path d="M7 3.700h8.500c1 0 2 .8 2 2v7.600c0 1.200-1 2-2 2h-12c-1.200 0-2-.8-2-2V9" fill="none" stroke="#fff" strokeWidth="1.400" /><path d="M7.500 6H15.300v7H4V9.500h2zM18.500 7.500c1.200 0 1.700.6 1.700 2s-.5 2-1.700 2zM4 0L0 6h2.500L2 10l4.500-6H4z" fill="#fff" /></svg>
);
const SidePanel = () => (
  <svg width="18" height="19" viewBox="0 0 18 19"><rect x="1" y="1" width="16" height="17" rx="2" fill="none" stroke="#c7c7c7" strokeWidth="2" /><path d="M11 1h6v17h-6z" fill="#c7c7c7" /></svg>
);
const ChatGlyph = () => (
  <svg width="31" height="29" viewBox="0 0 31 29" fill="none" stroke="#c3cbd0" strokeWidth="1"><path d="M5 1h21a4 4 0 0 1 4 4v12a4 4 0 0 1-4 4H14l-7 7v-7H5a4 4 0 0 1-4-4V5a4 4 0 0 1 4-4z" /><path d="M15.500 15.500h9c0-3-1.500-3.500-3.500-4.500 1.500-1.500 1-5-1.300-5-1.500 0-2.200 1.200-2.200 2.500M17 12l1-1" /><path d="M8 15.500c0-3 1.500-3.500 3.500-4.500-1.500-1.500-1-5 1.300-5s2.800 3.500 1.300 5c2 1 3.500 1.500 3.500 4.500z" fill="#00ed64" stroke="none" /></svg>
);

/* ---------- content ---------- */
const columns = ["Collection Name", "Documents", "Logical Data Size", "Avg Document Size", "Storage Size", "Indexes", "Index Size", "Avg Index Size"];
const collections = [
  ["admins", "0", "0B", "0B", "4KB", "1", "4KB", "4KB"],
  ["books", "0", "0B", "0B", "4KB", "1", "4KB", "4KB"],
  ["orders", "0", "0B", "0B", "4KB", "1", "4KB", "4KB"],
  ["users", "1", "108B", "108B", "20KB", "1", "20KB", "20KB"],
  ["vendors", "0", "0B", "0B", "4KB", "1", "4KB", "4KB"],
];
/* label, width, tracking */
const clusterTabs = [
  ["Overview", 146, 0.4], ["Real Time", 147, 0.1], ["Metrics", 127, 0.1], ["Collections", 163, 0.4], ["Atlas Search", 175, 0.4],
  ["Profiler", 124, 0], ["Performance Advisor", 250, 0.23], ["Online Archive", 192, 0.35], ["Cmd Line Tools", 194, 0],
];
/* label, tracking */
const services = [["Device Sync", 0.5], ["Triggers", 0.25], ["Data API", 0.75], ["Data Federation", 0.85], ["Atlas Search", 0.6], ["Stream Processing", 0.46]];
const security = [["Quickstart", 0.85], ["Backup", 0.85], ["Database Access", 0.75], ["Network Access", 0.5], ["Advanced", 1]];

export default function App() {
  return (
    <Screen>
      <Global />
      <TabStrip>
        <TabSearch><svg width="14" height="10" viewBox="0 0 14 10"><path d="M2 2l5 5 5-5" fill="none" stroke="#e3e3e3" strokeWidth="2.200" /></svg></TabSearch>
        <Tab $sep><FaGithub size={20} color="#fff" /><TabTitle $fade>Acxiom/README.md at main · omkar</TabTitle><Close /></Tab>
        <Tab $sep><ReactLogo /><TabTitle>ACXIOM</TabTitle><Close /></Tab>
        <Tab><ReactLogo /><TabTitle>React App</TabTitle><Close /></Tab>
        <ActiveTab><MongoFavicon /><TabTitle>Data | Cloud: MongoDB Cloud</TabTitle><Close c="#e8e8e8" /></ActiveTab>
        <NewTab><svg width="14" height="14" viewBox="0 0 14 14"><path d="M7 0v14M0 7h14" stroke="#d6d6d6" strokeWidth="2" /></svg></NewTab>
        <WindowControls>
          <svg width="13" height="13" viewBox="0 0 13 13"><path d="M0 6.500h13" stroke="#fff" strokeWidth="1.200" /></svg>
          <svg width="14" height="14" viewBox="0 0 14 14" fill="none" stroke="#fff" strokeWidth="1.200"><rect x=".8" y="2.800" width="10.500" height="10.500" rx="2" /><path d="M3.200.8H11a2.300 2.300 0 0 1 2.300 2.300v7.500" /></svg>
          <svg width="13" height="13" viewBox="0 0 13 13"><path d="M0 0l13 13M13 0L0 13" stroke="#fff" strokeWidth="1.200" /></svg>
        </WindowControls>
      </TabStrip>
      <ToolbarWrap>
        <Toolbar>
          <ToolButton><MdArrowBack size={22} /></ToolButton>
          <ToolButton $dim><MdArrowForward size={22} /></ToolButton>
          <ToolButton><MdRefresh size={23} /></ToolButton>
          <Omnibox>
            <SiteInfo><Tune /></SiteInfo>
            <Url><b>cloud.mongodb.com</b>/v2/64feb0a16c20171a5502e9b2#/metrics/replicaSet/64feb310411fe83739a875e5/explorer/LibraryManagementdatabase</Url>
            <ToolButton $w={40}><MdGTranslate size={21} /></ToolButton>
            <ToolButton $w={40}><MdStarOutline size={24} /></ToolButton>
          </Omnibox>
          <ToolButton $w={68}><MdOutlineExtension size={24} /></ToolButton>
          <ToolSeparator />
          <ToolButton $w={60}><SidePanel /></ToolButton>
          <ToolButton $w={31}><Portrait size={26} /></ToolButton>
          <ToolButton $w={57}><MdMoreVert size={25} /></ToolButton>
        </Toolbar>
      </ToolbarWrap>
      <Bookmarks>
        <Bookmark $w={90}><Gmail /><BookmarkText>Gmail</BookmarkText></Bookmark>
        <Bookmark $w={112}><YouTube /><BookmarkText>YouTube</BookmarkText></Bookmark>
        <Bookmark $w={89}><Maps /><BookmarkText>Maps</BookmarkText></Bookmark>
        <Bookmark $w={45}><Globe /></Bookmark>
        <Bookmark $w={45}><Globe /></Bookmark>
        <Bookmark $w={44}><Globe /></Bookmark>
        <Bookmark $w={140}><FormIcon /><BookmarkText>TECHNICAL TEST</BookmarkText></Bookmark>
        <BookmarksEnd><ToolSeparator /><Bookmark $w={127}><MdFolderOpen size={25} /><BookmarkText>All Bookmarks</BookmarkText></Bookmark></BookmarksEnd>
      </Bookmarks>

      <AtlasNav>
        <Brand><Leaf /><span>Atlas</span></Brand>
        <OrgPicker>
          <Building /><OrgName>Omkar's Org...</OrgName><CaretIcon />
          <OrgSettings><MdSettings size={21} /></OrgSettings>
        </OrgPicker>
        <NavLink $w={149} $ml={26} $ls="0.68px">Access Manager<CaretIcon /></NavLink>
        <NavLink $w={50} $ml={43}>Billing</NavLink>
        <NavEnd>
          <NavLink $w={90}>All Clusters</NavLink>
          <NavLink $w={89} $ml={34} $ls="0.8px">Get Help<CaretIcon /></NavLink>
          <UserPill>Omkar<CaretIcon /></UserPill>
        </NavEnd>
      </AtlasNav>
      <ProjectNav>
        <FolderSolid /><ProjectName>Project 0</ProjectName><CaretIcon />
        <ProjectMenu><Dots /></ProjectMenu>
        <CurrentProductTab $w={128}>
          <TabBlob width="94" height="46" viewBox="0 0 94 46"><path d="M0 46V15a15.500 15.500 0 0 1 31 0c0 8 6 15 14 16h25c14 0 22 4 23 15z" fill="#e3fcf7" /></TabBlob>
          <span>Data Services</span>
        </CurrentProductTab>
        <ProductTab $w={163}>App Services</ProductTab>
        <ProductTab $w={105} $ls="0.75px">Charts</ProductTab>
        <ProjectActions><InviteUser /><ActivityFeed /><Bell /></ProjectActions>
      </ProjectNav>

      <Body>
        <Sidebar>
          <SideItem $ls={0.75}>Overview</SideItem>
          <SideHeading><DatabaseIcon />DEPLOYMENT</SideHeading>
          <SideItemActive $ls={0.88}>Database</SideItemActive>
          <SideItem $ls={0.9}>Data Lake</SideItem>
          <SideHeading><LaptopIcon />SERVICES</SideHeading>
          {services.map(([s, ls]) => <SideItem key={s} $ls={ls}>{s}</SideItem>)}
          <SideHeading><LockIcon />SECURITY</SideHeading>
          {security.map(([s, ls]) => <SideItem key={s} $ls={ls}>{s}</SideItem>)}
        </Sidebar>
        <ScrollTrack $h={738}>
          <ScrollArrow $dir="up" $c="#a3a3a3" /><ScrollThumb $h={618} $mt={7} /><ScrollArrow $dir="down" $c="#505050" />
        </ScrollTrack>
        <MainColumn>
          <Main>
            <Breadcrumb>OMKAR'S ORG - 2023-09-11 &gt; PROJECT 0 &gt; DATABASES</Breadcrumb>
            <ClusterHeader>
              <ClusterGlyph><ReplicaIcon /></ClusterGlyph>
              <ClusterName>Cluster0</ClusterName>
              <Meta $w={105}><dt>VERSION</dt><dd>6.0.12</dd></Meta>
              <Meta $w={260}><dt>REGION</dt><dd>AWS N. Virginia (us-east-1)</dd></Meta>
            </ClusterHeader>
            <ClusterTabs>
              {clusterTabs.map(([t, w, ls]) => <ClusterTab key={t} $w={w} $ls={ls} $on={t === "Collections"}>{t}</ClusterTab>)}
            </ClusterTabs>
            <CountBar>
              <Count $w={107.5}><span>DATABASES:</span><b>4</b></Count>
              <Count $w={130} $ls={0.25}><span>COLLECTIONS:</span><b>16</b></Count>
              <OutlineButton $w={206} $ml="auto"><ChartIcon />VISUALIZE YOUR DATA</OutlineButton>
              <OutlineButton $w={103} $ml="25px"><FaSync size={13} />REFRESH</OutlineButton>
            </CountBar>
            <Explorer>
              <Namespaces>
                <CreateDatabase><svg width="11" height="11" viewBox="0 0 11 11"><path d="M5.500 0v11M0 5.500h11" stroke="#001e2b" strokeWidth="1.600" /></svg>Create Database</CreateDatabase>
                <SearchBox><SearchGlyph />Search Namespaces</SearchBox>
                <TreeOpen><TreeCaretDown />LibraryManagementdata...</TreeOpen>
                <TreeGroup>{collections.map(([n]) => <TreeLeaf key={n}>{n}</TreeLeaf>)}</TreeGroup>
                {["Mdatabase", "miniprojectdatabase", "mydatabase"].map((n) => <TreeClosed key={n}><TreeCaretRight />{n}</TreeClosed>)}
              </Namespaces>
              <Detail>
                <DbTitle>LibraryManagementdatabase</DbTitle>
                <StatRow>
                  <Stat $w={191}>LOGICAL DATA SIZE: <b>108B</b></Stat>
                  <Stat $w={161}>STORAGE SIZE: <b>36KB</b></Stat>
                  <Stat $w={138}>INDEX SIZE: <b>36KB</b></Stat>
                  <Stat $w={170}>TOTAL COLLECTIONS: <b>5</b></Stat>
                  <CreateCollection>CREATE COLLECTION</CreateCollection>
                </StatRow>
                <Table>
                  <HeadRow>{columns.map((c) => <span key={c}>{c}</span>)}</HeadRow>
                  {collections.map(([name, ...cells]) => (
                    <Row key={name}><CollectionLink>{name}</CollectionLink>{cells.map((c, i) => <span key={i}>{c}</span>)}</Row>
                  ))}
                </Table>
              </Detail>
            </Explorer>
          </Main>
          <HScroll><ScrollArrow $dir="left" $c="#a3a3a3" /><ScrollArrow $dir="right" $c="#a3a3a3" /></HScroll>
        </MainColumn>
        <EndColumn>
          <ScrollTrack $h={717}><ScrollArrow $dir="up" $c="#505050" /><ScrollThumb $h={461} $mt={34} /><ScrollArrow $dir="down" $c="#505050" /></ScrollTrack>
        </EndColumn>
        <CollapseButton><svg width="12" height="18" viewBox="0 0 12 18"><path d="M9.500 2L3 9l6.500 7" fill="none" stroke="#00684a" strokeWidth="3.400" strokeLinecap="round" /></svg></CollapseButton>
        <ChatButton><ChatGlyph /></ChatButton>
      </Body>

      <Taskbar>
        <Weather><Moon /><WeatherText><p>13°C</p><p>Clear</p></WeatherText></Weather>
        <WinLogo />
        <TaskSearch><SearchGlyph c="#e6e8ee" s={20} w={1.8} />Search<Axolotl /></TaskSearch>
        <TaskSlot><Copilot /></TaskSlot>
        <TaskSlot><TaskView /></TaskSlot>
        <TaskSlot><Teams /></TaskSlot>
        <TaskSlot><Edge /></TaskSlot>
        <TaskSlot><Firefox /></TaskSlot>
        <TaskSlot><Telegram /></TaskSlot>
        <TaskSlot><Store /></TaskSlot>
        <TaskSlot><LApp /><CountBadge $x={29}>1</CountBadge></TaskSlot>
        <TaskSlot><FaSpotify size={29} color="#1ed760" /></TaskSlot>
        <TaskSlot><Todo /></TaskSlot>
        <TaskSlot $open><Explore /></TaskSlot>
        <TaskSlot $active><ActiveTile><ChromeApp /></ActiveTile></TaskSlot>
        <TaskSlot><FaWhatsapp size={33} color="#23d366" /><CountBadge $x={27}>13</CountBadge></TaskSlot>
        <TaskSlot $open><VSCode /></TaskSlot>
        <Tray>
          <svg width="14" height="9" viewBox="0 0 14 9"><path d="M1 8l6-6 6 6" fill="none" stroke="#fff" strokeWidth="1.700" /></svg>
          <Language>ENG<br />IN</Language>
          <TrayIcons><Wifi /><Volume /><Battery /></TrayIcons>
          <Clock>22:42<br />16-12-2023</Clock>
          <Bell c="#99e9ff" w={17} h={20} />
        </Tray>
      </Taskbar>
    </Screen>
  );
}
